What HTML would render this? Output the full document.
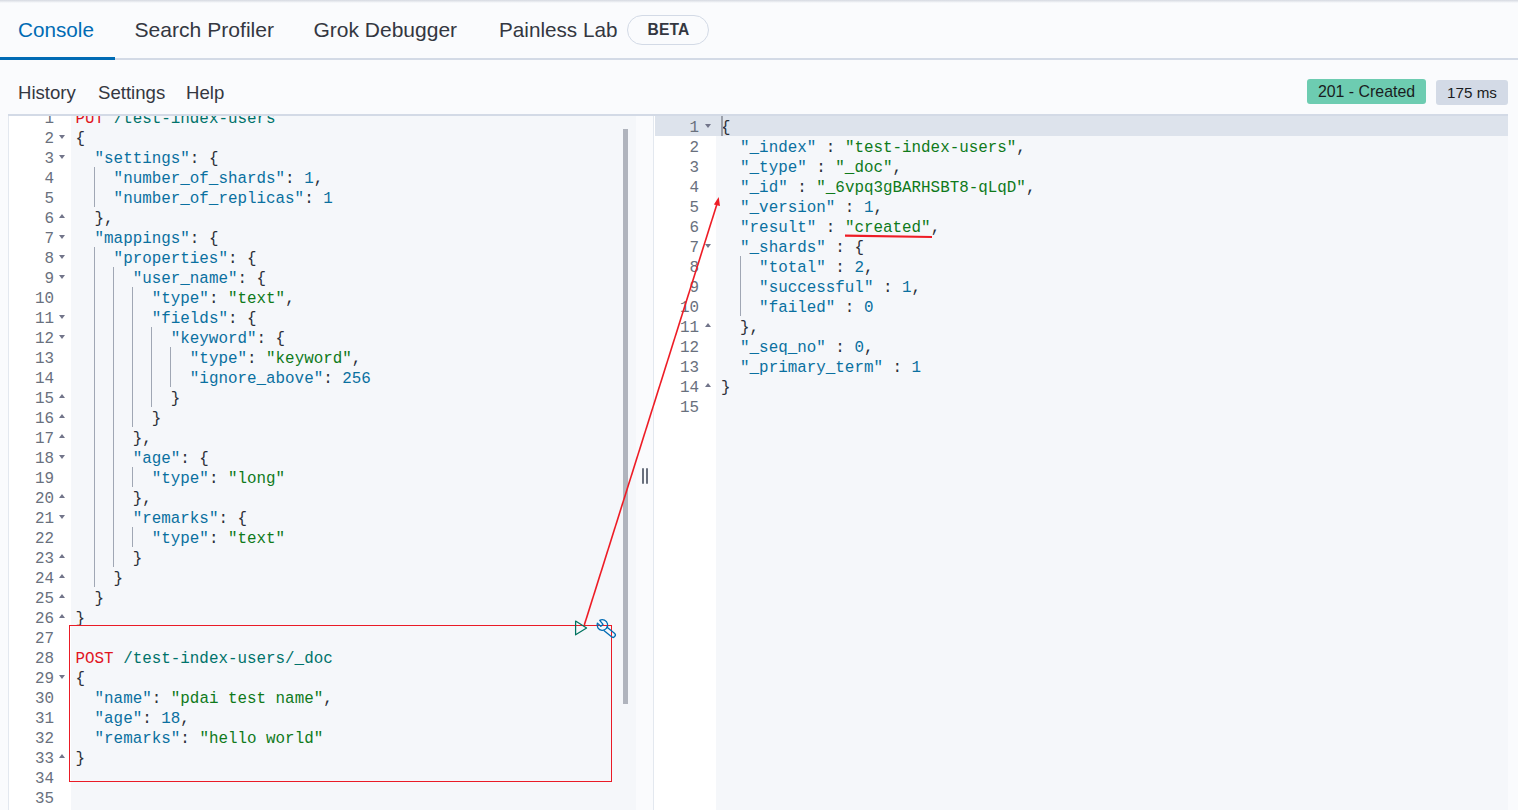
<!DOCTYPE html>
<html><head><meta charset="utf-8"><style>
*{margin:0;padding:0;box-sizing:border-box}
html,body{width:1518px;height:810px;overflow:hidden;background:#fafbfd;font-family:"Liberation Sans",sans-serif;color:#343741}
.abs{position:absolute}
.topshadow{position:absolute;left:0;top:0;width:1518px;height:3px;background:linear-gradient(#d5d9e1,#fafbfd)}
.tab{position:absolute;top:0;height:57px;font-size:20.7px;line-height:20px;white-space:nowrap}
.tabbar-border{position:absolute;left:0;top:58px;width:1518px;height:2px;background:#d3dae6}
.tab-active-ul{position:absolute;left:0;top:57px;width:115px;height:3px;background:#006bb4}
.beta{position:absolute;left:627px;top:15px;width:82px;height:30px;border:1px solid #d3dae6;border-radius:15px;font-weight:bold;font-size:15.6px;letter-spacing:0.15px;text-align:center;color:#343741}
.menu{position:absolute;font-size:18.6px;white-space:nowrap;color:#343741}
.badge{position:absolute;font-size:15.4px;white-space:nowrap;color:#1a1c21;border-radius:3px}
.panel{position:absolute;overflow:hidden}
.ln{position:absolute;height:20px;text-align:right;font-family:"Liberation Mono",monospace;font-size:15.88px;line-height:20px;color:#69707d}
.cl{position:absolute;height:20px;white-space:pre;font-family:"Liberation Mono",monospace;font-size:15.88px;line-height:20px}
.ig{position:absolute;width:1px;height:20px;background:#a0a7b4}
.fd{position:absolute;width:0;height:0;border-left:3px solid transparent;border-right:3px solid transparent;border-top:4px solid #72758a}
.fu{position:absolute;width:0;height:0;border-left:3px solid transparent;border-right:3px solid transparent;border-bottom:4px solid #72758a}
</style></head><body>
<div class="topshadow"></div>
<div class="tab" style="left:18px;top:20px;color:#006bb4">Console</div>
<div class="tab" style="left:134.5px;top:20px;font-size:21.1px">Search Profiler</div>
<div class="tab" style="left:313.5px;top:20px;font-size:21px">Grok Debugger</div>
<div class="tab" style="left:499px;top:20px">Painless Lab</div>
<div class="beta" style="line-height:27px;padding-left:1px">BETA</div>
<div class="tabbar-border"></div>
<div class="tab-active-ul"></div>

<div class="menu" style="left:18px;top:82px">History</div>
<div class="menu" style="left:98px;top:82px">Settings</div>
<div class="menu" style="left:186px;top:82px">Help</div>

<div class="badge" style="left:1307px;top:79px;width:119px;height:25px;background:#6dccb1;line-height:25px;text-align:center;font-size:15.9px">201 - Created</div>
<div class="badge" style="left:1436px;top:80px;width:72px;height:25px;background:#d3dae6;line-height:25px;text-align:center;font-size:15.2px">175 ms</div>

<!-- left panel -->
<div class="panel" style="left:8px;top:114px;width:628px;height:696px;background:#f5f7fa">
  <div class="abs" style="left:0;top:0;width:1px;height:696px;background:#e3e8ef"></div>
  <div class="abs" style="left:1px;top:0;width:62px;height:696px;background:#ffffff"></div>
  <div class="abs" style="left:0;top:0;width:628px;height:2px;background:#d3dae6;z-index:5"></div>
  <div class="abs" style="left:-8px;top:-114px;width:1518px;height:810px">
  <div class="ln" style="top:109px;left:-6px;width:60px">1</div>
<div class="cl" style="top:109px;left:75.5px"><span style="color:#e1141e">PUT</span><span style="color:#2b2f38"> </span><span style="color:#00736b">/test-index-users</span></div>
<div class="ln" style="top:129px;left:-6px;width:60px">2</div>
<div class="fd" style="top:135px;left:59px"></div>
<div class="cl" style="top:129px;left:75.5px"><span style="color:#2b2f38">{</span></div>
<div class="ln" style="top:149px;left:-6px;width:60px">3</div>
<div class="fd" style="top:155px;left:59px"></div>
<div class="cl" style="top:149px;left:75.5px"><span style="color:#2b2f38">  </span><span style="color:#0a70a0">&quot;settings&quot;</span><span style="color:#2b2f38">: {</span></div>
<div class="ln" style="top:169px;left:-6px;width:60px">4</div>
<div class="ig" style="top:167px;left:94.06px"></div>
<div class="cl" style="top:169px;left:75.5px"><span style="color:#2b2f38">    </span><span style="color:#0a70a0">&quot;number_of_shards&quot;</span><span style="color:#2b2f38">: </span><span style="color:#0a70a0">1</span><span style="color:#2b2f38">,</span></div>
<div class="ln" style="top:189px;left:-6px;width:60px">5</div>
<div class="ig" style="top:187px;left:94.06px"></div>
<div class="cl" style="top:189px;left:75.5px"><span style="color:#2b2f38">    </span><span style="color:#0a70a0">&quot;number_of_replicas&quot;</span><span style="color:#2b2f38">: </span><span style="color:#0a70a0">1</span></div>
<div class="ln" style="top:209px;left:-6px;width:60px">6</div>
<div class="fu" style="top:214px;left:59px"></div>
<div class="cl" style="top:209px;left:75.5px"><span style="color:#2b2f38">  },</span></div>
<div class="ln" style="top:229px;left:-6px;width:60px">7</div>
<div class="fd" style="top:235px;left:59px"></div>
<div class="cl" style="top:229px;left:75.5px"><span style="color:#2b2f38">  </span><span style="color:#0a70a0">&quot;mappings&quot;</span><span style="color:#2b2f38">: {</span></div>
<div class="ln" style="top:249px;left:-6px;width:60px">8</div>
<div class="fd" style="top:255px;left:59px"></div>
<div class="ig" style="top:247px;left:94.06px"></div>
<div class="cl" style="top:249px;left:75.5px"><span style="color:#2b2f38">    </span><span style="color:#0a70a0">&quot;properties&quot;</span><span style="color:#2b2f38">: {</span></div>
<div class="ln" style="top:269px;left:-6px;width:60px">9</div>
<div class="fd" style="top:275px;left:59px"></div>
<div class="ig" style="top:267px;left:94.06px"></div>
<div class="ig" style="top:267px;left:113.12px"></div>
<div class="cl" style="top:269px;left:75.5px"><span style="color:#2b2f38">      </span><span style="color:#0a70a0">&quot;user_name&quot;</span><span style="color:#2b2f38">: {</span></div>
<div class="ln" style="top:289px;left:-6px;width:60px">10</div>
<div class="ig" style="top:287px;left:94.06px"></div>
<div class="ig" style="top:287px;left:113.12px"></div>
<div class="ig" style="top:287px;left:132.18px"></div>
<div class="cl" style="top:289px;left:75.5px"><span style="color:#2b2f38">        </span><span style="color:#0a70a0">&quot;type&quot;</span><span style="color:#2b2f38">: </span><span style="color:#0f7a1a">&quot;text&quot;</span><span style="color:#2b2f38">,</span></div>
<div class="ln" style="top:309px;left:-6px;width:60px">11</div>
<div class="fd" style="top:315px;left:59px"></div>
<div class="ig" style="top:307px;left:94.06px"></div>
<div class="ig" style="top:307px;left:113.12px"></div>
<div class="ig" style="top:307px;left:132.18px"></div>
<div class="cl" style="top:309px;left:75.5px"><span style="color:#2b2f38">        </span><span style="color:#0a70a0">&quot;fields&quot;</span><span style="color:#2b2f38">: {</span></div>
<div class="ln" style="top:329px;left:-6px;width:60px">12</div>
<div class="fd" style="top:335px;left:59px"></div>
<div class="ig" style="top:327px;left:94.06px"></div>
<div class="ig" style="top:327px;left:113.12px"></div>
<div class="ig" style="top:327px;left:132.18px"></div>
<div class="ig" style="top:327px;left:151.24px"></div>
<div class="cl" style="top:329px;left:75.5px"><span style="color:#2b2f38">          </span><span style="color:#0a70a0">&quot;keyword&quot;</span><span style="color:#2b2f38">: {</span></div>
<div class="ln" style="top:349px;left:-6px;width:60px">13</div>
<div class="ig" style="top:347px;left:94.06px"></div>
<div class="ig" style="top:347px;left:113.12px"></div>
<div class="ig" style="top:347px;left:132.18px"></div>
<div class="ig" style="top:347px;left:151.24px"></div>
<div class="ig" style="top:347px;left:170.30px"></div>
<div class="cl" style="top:349px;left:75.5px"><span style="color:#2b2f38">            </span><span style="color:#0a70a0">&quot;type&quot;</span><span style="color:#2b2f38">: </span><span style="color:#0f7a1a">&quot;keyword&quot;</span><span style="color:#2b2f38">,</span></div>
<div class="ln" style="top:369px;left:-6px;width:60px">14</div>
<div class="ig" style="top:367px;left:94.06px"></div>
<div class="ig" style="top:367px;left:113.12px"></div>
<div class="ig" style="top:367px;left:132.18px"></div>
<div class="ig" style="top:367px;left:151.24px"></div>
<div class="ig" style="top:367px;left:170.30px"></div>
<div class="cl" style="top:369px;left:75.5px"><span style="color:#2b2f38">            </span><span style="color:#0a70a0">&quot;ignore_above&quot;</span><span style="color:#2b2f38">: </span><span style="color:#0a70a0">256</span></div>
<div class="ln" style="top:389px;left:-6px;width:60px">15</div>
<div class="fu" style="top:394px;left:59px"></div>
<div class="ig" style="top:387px;left:94.06px"></div>
<div class="ig" style="top:387px;left:113.12px"></div>
<div class="ig" style="top:387px;left:132.18px"></div>
<div class="ig" style="top:387px;left:151.24px"></div>
<div class="cl" style="top:389px;left:75.5px"><span style="color:#2b2f38">          }</span></div>
<div class="ln" style="top:409px;left:-6px;width:60px">16</div>
<div class="fu" style="top:414px;left:59px"></div>
<div class="ig" style="top:407px;left:94.06px"></div>
<div class="ig" style="top:407px;left:113.12px"></div>
<div class="ig" style="top:407px;left:132.18px"></div>
<div class="cl" style="top:409px;left:75.5px"><span style="color:#2b2f38">        }</span></div>
<div class="ln" style="top:429px;left:-6px;width:60px">17</div>
<div class="fu" style="top:434px;left:59px"></div>
<div class="ig" style="top:427px;left:94.06px"></div>
<div class="ig" style="top:427px;left:113.12px"></div>
<div class="cl" style="top:429px;left:75.5px"><span style="color:#2b2f38">      },</span></div>
<div class="ln" style="top:449px;left:-6px;width:60px">18</div>
<div class="fd" style="top:455px;left:59px"></div>
<div class="ig" style="top:447px;left:94.06px"></div>
<div class="ig" style="top:447px;left:113.12px"></div>
<div class="cl" style="top:449px;left:75.5px"><span style="color:#2b2f38">      </span><span style="color:#0a70a0">&quot;age&quot;</span><span style="color:#2b2f38">: {</span></div>
<div class="ln" style="top:469px;left:-6px;width:60px">19</div>
<div class="ig" style="top:467px;left:94.06px"></div>
<div class="ig" style="top:467px;left:113.12px"></div>
<div class="ig" style="top:467px;left:132.18px"></div>
<div class="cl" style="top:469px;left:75.5px"><span style="color:#2b2f38">        </span><span style="color:#0a70a0">&quot;type&quot;</span><span style="color:#2b2f38">: </span><span style="color:#0f7a1a">&quot;long&quot;</span></div>
<div class="ln" style="top:489px;left:-6px;width:60px">20</div>
<div class="fu" style="top:494px;left:59px"></div>
<div class="ig" style="top:487px;left:94.06px"></div>
<div class="ig" style="top:487px;left:113.12px"></div>
<div class="cl" style="top:489px;left:75.5px"><span style="color:#2b2f38">      },</span></div>
<div class="ln" style="top:509px;left:-6px;width:60px">21</div>
<div class="fd" style="top:515px;left:59px"></div>
<div class="ig" style="top:507px;left:94.06px"></div>
<div class="ig" style="top:507px;left:113.12px"></div>
<div class="cl" style="top:509px;left:75.5px"><span style="color:#2b2f38">      </span><span style="color:#0a70a0">&quot;remarks&quot;</span><span style="color:#2b2f38">: {</span></div>
<div class="ln" style="top:529px;left:-6px;width:60px">22</div>
<div class="ig" style="top:527px;left:94.06px"></div>
<div class="ig" style="top:527px;left:113.12px"></div>
<div class="ig" style="top:527px;left:132.18px"></div>
<div class="cl" style="top:529px;left:75.5px"><span style="color:#2b2f38">        </span><span style="color:#0a70a0">&quot;type&quot;</span><span style="color:#2b2f38">: </span><span style="color:#0f7a1a">&quot;text&quot;</span></div>
<div class="ln" style="top:549px;left:-6px;width:60px">23</div>
<div class="fu" style="top:554px;left:59px"></div>
<div class="ig" style="top:547px;left:94.06px"></div>
<div class="ig" style="top:547px;left:113.12px"></div>
<div class="cl" style="top:549px;left:75.5px"><span style="color:#2b2f38">      }</span></div>
<div class="ln" style="top:569px;left:-6px;width:60px">24</div>
<div class="fu" style="top:574px;left:59px"></div>
<div class="ig" style="top:567px;left:94.06px"></div>
<div class="cl" style="top:569px;left:75.5px"><span style="color:#2b2f38">    }</span></div>
<div class="ln" style="top:589px;left:-6px;width:60px">25</div>
<div class="fu" style="top:594px;left:59px"></div>
<div class="cl" style="top:589px;left:75.5px"><span style="color:#2b2f38">  }</span></div>
<div class="ln" style="top:609px;left:-6px;width:60px">26</div>
<div class="fu" style="top:614px;left:59px"></div>
<div class="cl" style="top:609px;left:75.5px"><span style="color:#2b2f38">}</span></div>
<div class="ln" style="top:629px;left:-6px;width:60px">27</div>
<div class="ln" style="top:649px;left:-6px;width:60px">28</div>
<div class="cl" style="top:649px;left:75.5px"><span style="color:#e1141e">POST</span><span style="color:#2b2f38"> </span><span style="color:#00736b">/test-index-users/_doc</span></div>
<div class="ln" style="top:669px;left:-6px;width:60px">29</div>
<div class="fd" style="top:675px;left:59px"></div>
<div class="cl" style="top:669px;left:75.5px"><span style="color:#2b2f38">{</span></div>
<div class="ln" style="top:689px;left:-6px;width:60px">30</div>
<div class="cl" style="top:689px;left:75.5px"><span style="color:#2b2f38">  </span><span style="color:#0a70a0">&quot;name&quot;</span><span style="color:#2b2f38">: </span><span style="color:#0f7a1a">&quot;pdai test name&quot;</span><span style="color:#2b2f38">,</span></div>
<div class="ln" style="top:709px;left:-6px;width:60px">31</div>
<div class="cl" style="top:709px;left:75.5px"><span style="color:#2b2f38">  </span><span style="color:#0a70a0">&quot;age&quot;</span><span style="color:#2b2f38">: </span><span style="color:#0a70a0">18</span><span style="color:#2b2f38">,</span></div>
<div class="ln" style="top:729px;left:-6px;width:60px">32</div>
<div class="cl" style="top:729px;left:75.5px"><span style="color:#2b2f38">  </span><span style="color:#0a70a0">&quot;remarks&quot;</span><span style="color:#2b2f38">: </span><span style="color:#0f7a1a">&quot;hello world&quot;</span></div>
<div class="ln" style="top:749px;left:-6px;width:60px">33</div>
<div class="fu" style="top:754px;left:59px"></div>
<div class="cl" style="top:749px;left:75.5px"><span style="color:#2b2f38">}</span></div>
<div class="ln" style="top:769px;left:-6px;width:60px">34</div>
<div class="ln" style="top:789px;left:-6px;width:60px">35</div>
  </div>
  <div class="abs" style="left:615px;top:15px;width:5px;height:575px;background:#b0b4bd"></div>
</div>

<!-- splitter -->
<div class="abs" style="left:636px;top:114px;width:17px;height:2px;background:#d3dae6"></div>
<div class="abs" style="left:642px;top:468px;width:2px;height:16px;background:#69707d;border-radius:1px"></div>
<div class="abs" style="left:646px;top:468px;width:2px;height:16px;background:#69707d;border-radius:1px"></div>

<!-- right panel -->
<div class="panel" style="left:653px;top:114px;width:855px;height:696px;background:#f5f7fa">
  <div class="abs" style="left:0;top:0;width:1px;height:696px;background:#e3e8ef"></div>
  <div class="abs" style="left:1px;top:0;width:62px;height:696px;background:#ffffff"></div>
  <div class="abs" style="left:2px;top:2px;width:853px;height:20px;background:#dde3ec"></div>
  <div class="abs" style="left:0;top:0;width:855px;height:2px;background:#d3dae6;z-index:5"></div>
  <div class="abs" style="left:-653px;top:-114px;width:1518px;height:810px">
  <div class="ln" style="top:118px;left:639px;width:60px">1</div>
<div class="fd" style="top:124px;left:705px"></div>
<div class="cl" style="top:118px;left:721px"><span style="color:#2b2f38">{</span></div>
<div class="ln" style="top:138px;left:639px;width:60px">2</div>
<div class="cl" style="top:138px;left:721px"><span style="color:#2b2f38">  </span><span style="color:#0a70a0">&quot;_index&quot;</span><span style="color:#2b2f38"> : </span><span style="color:#0f7a1a">&quot;test-index-users&quot;</span><span style="color:#2b2f38">,</span></div>
<div class="ln" style="top:158px;left:639px;width:60px">3</div>
<div class="cl" style="top:158px;left:721px"><span style="color:#2b2f38">  </span><span style="color:#0a70a0">&quot;_type&quot;</span><span style="color:#2b2f38"> : </span><span style="color:#0f7a1a">&quot;_doc&quot;</span><span style="color:#2b2f38">,</span></div>
<div class="ln" style="top:178px;left:639px;width:60px">4</div>
<div class="cl" style="top:178px;left:721px"><span style="color:#2b2f38">  </span><span style="color:#0a70a0">&quot;_id&quot;</span><span style="color:#2b2f38"> : </span><span style="color:#0f7a1a">&quot;_6vpq3gBARHSBT8-qLqD&quot;</span><span style="color:#2b2f38">,</span></div>
<div class="ln" style="top:198px;left:639px;width:60px">5</div>
<div class="cl" style="top:198px;left:721px"><span style="color:#2b2f38">  </span><span style="color:#0a70a0">&quot;_version&quot;</span><span style="color:#2b2f38"> : </span><span style="color:#0a70a0">1</span><span style="color:#2b2f38">,</span></div>
<div class="ln" style="top:218px;left:639px;width:60px">6</div>
<div class="cl" style="top:218px;left:721px"><span style="color:#2b2f38">  </span><span style="color:#0a70a0">&quot;result&quot;</span><span style="color:#2b2f38"> : </span><span style="color:#0f7a1a">&quot;created&quot;</span><span style="color:#2b2f38">,</span></div>
<div class="ln" style="top:238px;left:639px;width:60px">7</div>
<div class="fd" style="top:244px;left:705px"></div>
<div class="cl" style="top:238px;left:721px"><span style="color:#2b2f38">  </span><span style="color:#0a70a0">&quot;_shards&quot;</span><span style="color:#2b2f38"> : {</span></div>
<div class="ln" style="top:258px;left:639px;width:60px">8</div>
<div class="ig" style="top:256px;left:739.56px"></div>
<div class="cl" style="top:258px;left:721px"><span style="color:#2b2f38">    </span><span style="color:#0a70a0">&quot;total&quot;</span><span style="color:#2b2f38"> : </span><span style="color:#0a70a0">2</span><span style="color:#2b2f38">,</span></div>
<div class="ln" style="top:278px;left:639px;width:60px">9</div>
<div class="ig" style="top:276px;left:739.56px"></div>
<div class="cl" style="top:278px;left:721px"><span style="color:#2b2f38">    </span><span style="color:#0a70a0">&quot;successful&quot;</span><span style="color:#2b2f38"> : </span><span style="color:#0a70a0">1</span><span style="color:#2b2f38">,</span></div>
<div class="ln" style="top:298px;left:639px;width:60px">10</div>
<div class="ig" style="top:296px;left:739.56px"></div>
<div class="cl" style="top:298px;left:721px"><span style="color:#2b2f38">    </span><span style="color:#0a70a0">&quot;failed&quot;</span><span style="color:#2b2f38"> : </span><span style="color:#0a70a0">0</span></div>
<div class="ln" style="top:318px;left:639px;width:60px">11</div>
<div class="fu" style="top:323px;left:705px"></div>
<div class="cl" style="top:318px;left:721px"><span style="color:#2b2f38">  },</span></div>
<div class="ln" style="top:338px;left:639px;width:60px">12</div>
<div class="cl" style="top:338px;left:721px"><span style="color:#2b2f38">  </span><span style="color:#0a70a0">&quot;_seq_no&quot;</span><span style="color:#2b2f38"> : </span><span style="color:#0a70a0">0</span><span style="color:#2b2f38">,</span></div>
<div class="ln" style="top:358px;left:639px;width:60px">13</div>
<div class="cl" style="top:358px;left:721px"><span style="color:#2b2f38">  </span><span style="color:#0a70a0">&quot;_primary_term&quot;</span><span style="color:#2b2f38"> : </span><span style="color:#0a70a0">1</span></div>
<div class="ln" style="top:378px;left:639px;width:60px">14</div>
<div class="fu" style="top:383px;left:705px"></div>
<div class="cl" style="top:378px;left:721px"><span style="color:#2b2f38">}</span></div>
<div class="ln" style="top:398px;left:639px;width:60px">15</div>
  </div>
  <div class="abs" style="left:68px;top:2px;width:2px;height:20px;background:#9ba0aa"></div>
</div>

<!-- annotations -->
<svg class="abs" style="left:0;top:0" width="1518" height="810" viewBox="0 0 1518 810">
  <rect x="69.5" y="625.5" width="542" height="156" fill="none" stroke="#ea1b26" stroke-width="1"/>
  <line x1="584.3" y1="625" x2="717.3" y2="203" stroke="#ee1c25" stroke-width="1.6"/>
  <polygon points="718.7,197.0 713.9,204.6 720.0,206.0" fill="#ee1c25"/>
  <path d="M845 235.6 L932 237" stroke="#ee1c25" stroke-width="2.2" fill="none"/>
  <path d="M575.6 621 L586.6 628 L575.6 634.8 Z" fill="none" stroke="#00735f" stroke-width="1.25" stroke-linejoin="round"/>
  <g stroke="#006bb4" stroke-width="1.3" fill="none" stroke-linejoin="round">
    <path d="M599.7 620.4 A5.3 5.3 0 1 1 597.4 623.1 L600.8 626.3 L603.0 624.4 Z"/>
    <path d="M606.45 626.7 L614.45 633.2 A2.3 2.3 0 0 1 611.55 636.8 L603.55 630.3"/>
  </g>
</svg>
</body></html>
